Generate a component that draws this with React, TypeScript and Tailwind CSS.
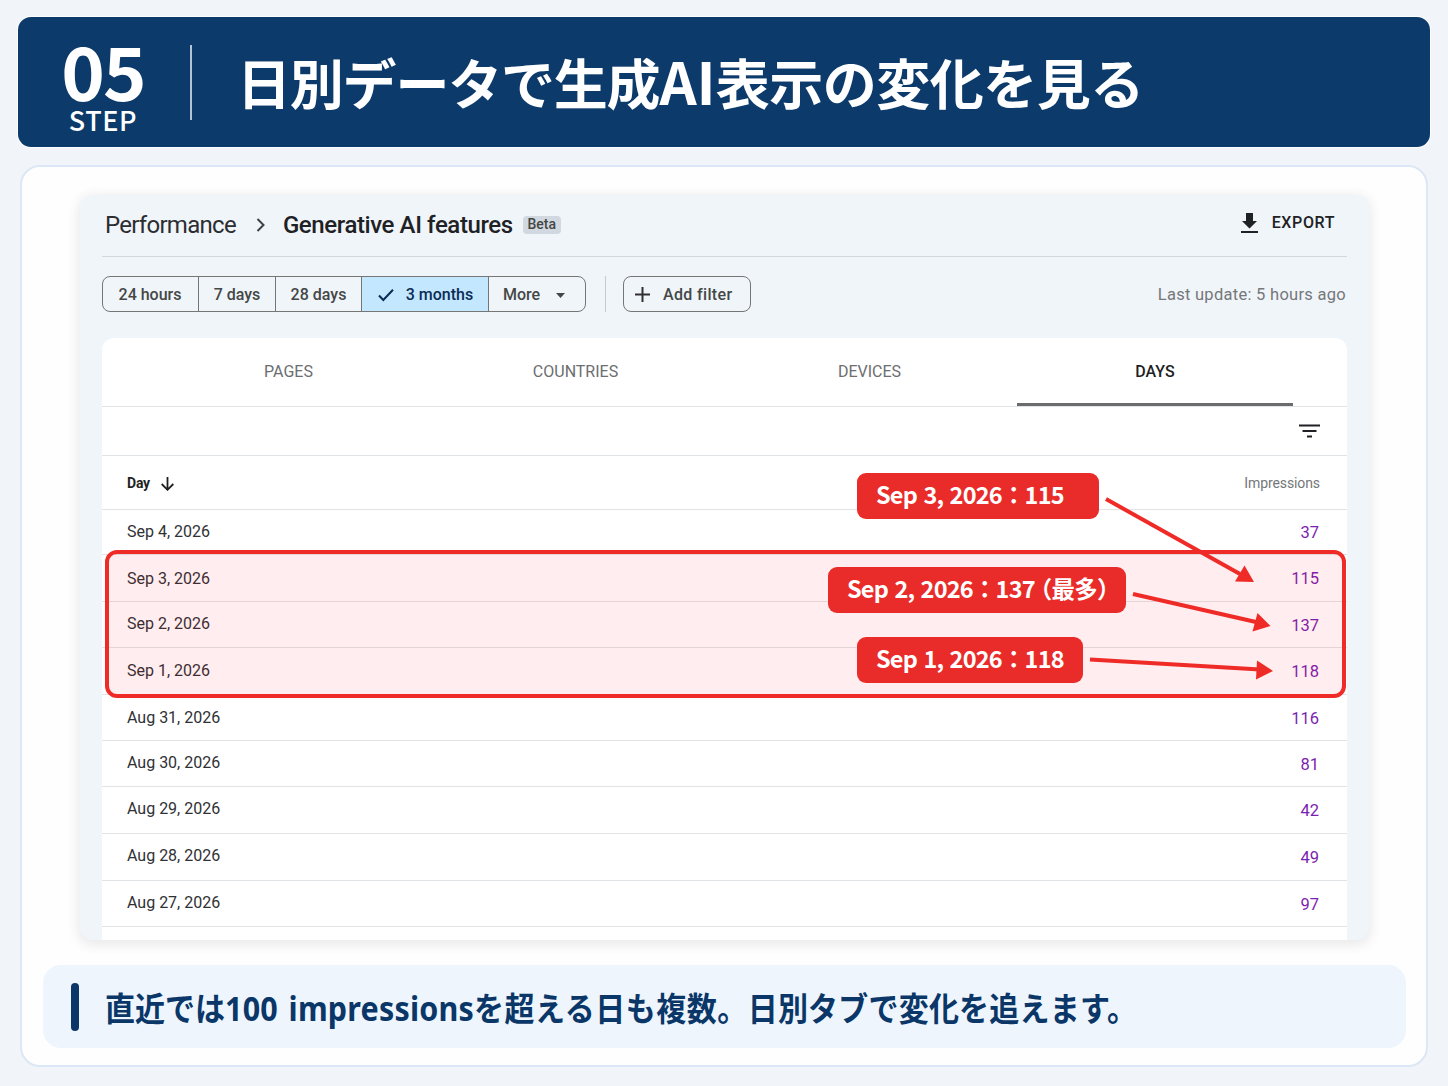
import React from "react";

const jp = "font-['Noto_Sans_CJK_JP',sans-serif]";

const rows = [
  { day: "Sep 4, 2026", value: 37, h: "h-[45px]", pad: "pb-px", valuePad: "pt-[2px]" },
  { day: "Sep 3, 2026", value: 115, h: "h-[47px]", pad: "pt-[1px]", valuePad: "pt-[3px]" },
  { day: "Sep 2, 2026", value: 137, h: "h-[46px]", pad: "pb-[1px]", valuePad: "pt-[3px]" },
  { day: "Sep 1, 2026", value: 118, h: "h-[47px]", pad: "", valuePad: "pt-[3px]" },
  { day: "Aug 31, 2026", value: 116, h: "h-[46px]", pad: "", valuePad: "pt-[3px]" },
  { day: "Aug 30, 2026", value: 81, h: "h-[46px]", pad: "pb-[1px]", valuePad: "pt-[3px]" },
  { day: "Aug 29, 2026", value: 42, h: "h-[47px]", pad: "pb-[2px]", valuePad: "pt-[2px]" },
  { day: "Aug 28, 2026", value: 49, h: "h-[47px]", pad: "pb-[2px]", valuePad: "pt-[2px]" },
  { day: "Aug 27, 2026", value: 97, h: "h-[46px]", pad: "pb-[2px]", valuePad: "pt-[3px]" },
];

function Header() {
  return (
    <header className={`flex h-[130px] items-center rounded-[13px] bg-[#0b3a6b] text-white ring-1 ring-white/80 ${jp}`}>
      <div className="flex h-full w-[172px] flex-col items-center pt-[20px]">
        <div className="h-[68px] text-[74px] leading-[64px] font-bold tracking-[-2px]">
          <span className="relative -left-px">05</span>
        </div>
        <div className="-ml-[2px] h-[28px] text-[27px] leading-[30px] font-medium tracking-[0.6px]">STEP</div>
      </div>
      <div className="h-[75px] w-[2px] bg-[#b4c4d8]" />
      <h1 className="mt-[-3px] ml-[45px] text-[54px] leading-[80px] font-bold tracking-[-0.5px] whitespace-nowrap">
        <span className="tracking-[-1.2px]">日別データで生成</span>
        <span className="text-[58px] tracking-[0px]">AI</span>表示の変化を見る
      </h1>
    </header>
  );
}

function Toolbar() {
  const cell = "flex h-full items-center justify-center border-r border-[#747775] pt-px";
  return (
    <div className="mt-[19px] flex h-[36px] items-center text-[16px] font-medium text-[#444746]">
      <div className="flex h-full overflow-hidden rounded-[8px] border border-[#747775]">
        <div className={`${cell} w-[96px] pr-[1px]`}>24 hours</div>
        <div className={`${cell} w-[77px]`}>7 days</div>
        <div className={`${cell} w-[86px]`}>28 days</div>
        <div className={`${cell} w-[127px] bg-[#c2e7ff] pl-px text-[#0b2c55]`}>
          <svg className="mr-[12px]" width="16" height="14" viewBox="0 0 16 14" fill="none" stroke="currentColor" strokeWidth="2">
            <path d="M1 7.500 5.300 12 15 1.800" />
          </svg>
          3 months
        </div>
        <div className="flex w-[96px] items-center pt-[2px] pl-[14px]">
          More
          <svg className="ml-[16px]" width="9" height="5" viewBox="0 0 9 5" fill="currentColor">
            <path d="M0 0h9L4.500 5z" />
          </svg>
        </div>
      </div>
      <div className="ml-[19px] h-full w-px bg-[#c7cbd0]" />
      <div className="ml-[17px] flex h-[36px] w-[128px] items-center rounded-[8px] border border-[#747775] pl-[11px]">
        <svg className="mr-[13px]" width="15" height="15" viewBox="0 0 15 15" fill="none" stroke="#303030" strokeWidth="2">
          <path d="M7.500 0v15M0 7.500h15" />
        </svg>
        <span className="pt-[2px] tracking-[0.350px]">Add filter</span>
      </div>
      <div className="mr-px ml-auto pt-[2px] text-[16.500px] font-normal tracking-[0.280px] text-[#757779]">Last update: 5 hours ago</div>
    </div>
  );
}

function Callout({ className, children }: { className: string; children: React.ReactNode }) {
  return (
    <div className={`absolute h-[46px] rounded-[9px] bg-[#e92b29] pl-[19px] text-[23.500px] leading-[42px] font-bold tracking-[-0.800px] whitespace-nowrap text-white [word-spacing:1.800px] ${jp} ${className}`}>
      {children}
    </div>
  );
}

function Annotations() {
  return (
    <>
      <div className="absolute top-[212px] left-[3px] h-[148px] w-[1241px] rounded-[12px] border-4 border-[#ef2b27] bg-[#ff0014]/[0.07]" />
      <Callout className="top-[135px] left-[755px] w-[242px]">Sep 3, 2026：115</Callout>
      <Callout className="top-[229px] left-[726px] w-[298px]">
        Sep 2, 2026：137<span className="-ml-[6px]">（最多）</span>
      </Callout>
      <Callout className="top-[299px] left-[755px] w-[226px]">Sep 1, 2026：118</Callout>
      <svg className="absolute top-0 left-0" width="1245" height="400" viewBox="102 338 1245 400" fill="#ef2b27" stroke="#ef2b27">
        <path strokeWidth="4" d="M1106 499 1240 574" />
        <path stroke="none" d="M1254 582 1235 581.500 1244.500 565.500Z" />
        <path strokeWidth="4" d="M1133 594 1256 622" />
        <path stroke="none" d="M1270.500 626 1252.500 631.500 1257.500 613Z" />
        <path strokeWidth="4" d="M1090 659.500 1260 669.500" />
        <path stroke="none" d="M1273 671 1256 679.500 1257 660.500Z" />
      </svg>
    </>
  );
}

function Table() {
  return (
    <div className="relative mt-[26px] h-[602px] rounded-t-[12px] bg-white">
      <div className="flex h-[69px] border-b border-[#e1e4e7] text-[16px] text-[#6c6e70]">
        <div className="flex w-[373px] items-center justify-center pb-px">PAGES</div>
        <div className="flex w-[201px] items-center justify-center pb-px">COUNTRIES</div>
        <div className="ml-[93px] flex w-[201px] items-center justify-center pb-px">DEVICES</div>
        <div className="ml-[47px] flex h-[68px] w-[276px] items-center justify-center border-b-[3px] border-[#6a6c6e] pt-[2px] font-medium text-[#1f1f1f]">DAYS</div>
      </div>
      <div className="flex h-[49px] items-center justify-end border-b border-[#e1e4e7] pr-[27px]">
        <svg width="21" height="14" viewBox="0 0 21 14" fill="none" stroke="#202124" strokeWidth="2.200">
          <path d="M0 1.500h21M3.500 7h14M8 12.500h5" />
        </svg>
      </div>
      <div className="flex h-[54px] items-center border-b border-[#e1e4e7] pt-[2px] pr-[27px] pl-[25px] text-[14px]">
        <span className="font-bold tracking-[-0.200px] text-[#1f1f1f]">Day</span>
        <svg className="ml-[11px]" width="13" height="14" viewBox="0 0 13 14" fill="none" stroke="#1f1f1f" strokeWidth="1.800">
          <path d="M6.500 0v12.500M.7 7l5.800 5.800L12.300 7" />
        </svg>
        <span className="ml-auto tracking-[-0.100px] text-[#757779]">Impressions</span>
      </div>
      {rows.map((row) => (
        <div key={row.day} className={`flex ${row.h} items-center justify-between border-b border-[#e1e4e7] pr-[28px] pl-[25px] text-[16px] text-[#303134]`}>
          <span className={row.pad}>{row.day}</span>
          <span className={`text-[16.500px] text-[#7b1fb0] ${row.valuePad}`}>{row.value}</span>
        </div>
      ))}
      <Annotations />
    </div>
  );
}

function ReportCard() {
  return (
    <section className="mx-auto h-[745px] w-[1289px] overflow-hidden rounded-[13px] bg-[#f0f5fa] px-[22px] font-[Roboto,sans-serif] shadow-[0_3px_12px_2px_rgba(60,64,80,0.11)]">
      <div className="flex h-[62px] items-center border-b border-[#d3d7db] pb-[2px] pl-[4px] text-[24px] text-[#2c2d30]">
        <span className="-ml-px tracking-[-0.720px]">Performance</span>
        <svg className="ml-[20px]" width="9" height="14" viewBox="0 0 9 14" fill="none" stroke="#3c4043" strokeWidth="2">
          <path d="m1.500 1 6 6-6 6" />
        </svg>
        <span className="ml-[18px] font-medium tracking-[-0.400px] text-[#202124]">Generative AI features</span>
        <span className="ml-[10px] flex h-[18px] w-[38px] items-center justify-center rounded-[4px] bg-[#d1d8df] text-[14px] font-medium text-[#444746]">Beta</span>
        <div className="-mt-[4px] mr-[12px] ml-auto flex items-center text-[16px] font-medium tracking-[0.600px] text-[#202124]">
          <svg className="mr-[14px]" width="17" height="20" viewBox="0 0 17 20" fill="currentColor">
            <path d="M5 0h7v8h4l-7.500 7.500L1 8h4zM0 18h17v2H0z" />
          </svg>
          EXPORT
        </div>
      </div>
      <Toolbar />
      <Table />
    </section>
  );
}

export default function App() {
  return (
    <main className="h-[1086px] w-[1448px] overflow-hidden bg-[#f1f5fa] pt-[17px] pr-[18px] pl-[18px]">
      <Header />
      <div className="mt-[18px] ml-[2px] h-[902px] w-[1408px] rounded-[20px] border-2 border-[#dce7f5] bg-[#fefefe] pt-[28px] pl-px">
        <ReportCard />
        <footer className={`mt-[25px] ml-[20px] flex h-[83px] w-[1363px] items-center rounded-[18px] bg-[#eef5fd] pl-[28px] text-[#0a3768] ${jp}`}>
          <div className="h-[48px] w-[8px] rounded-full bg-[#0a3768]" />
          <p className="mt-[2px] ml-[26px] origin-left scale-y-110 text-[30px] leading-[44px] font-bold whitespace-nowrap">
            直近では
            <span className="font-['Noto_Sans',sans-serif] text-[30.500px] tracking-[0.200px] [word-spacing:2.500px]">100 impressions</span>
            <span className="tracking-[0.500px]">を超える日も複数。</span>
            <span className="tracking-[0.200px]">日別タブで変化を追えます。</span>
          </p>
        </footer>
      </div>
    </main>
  );
}
